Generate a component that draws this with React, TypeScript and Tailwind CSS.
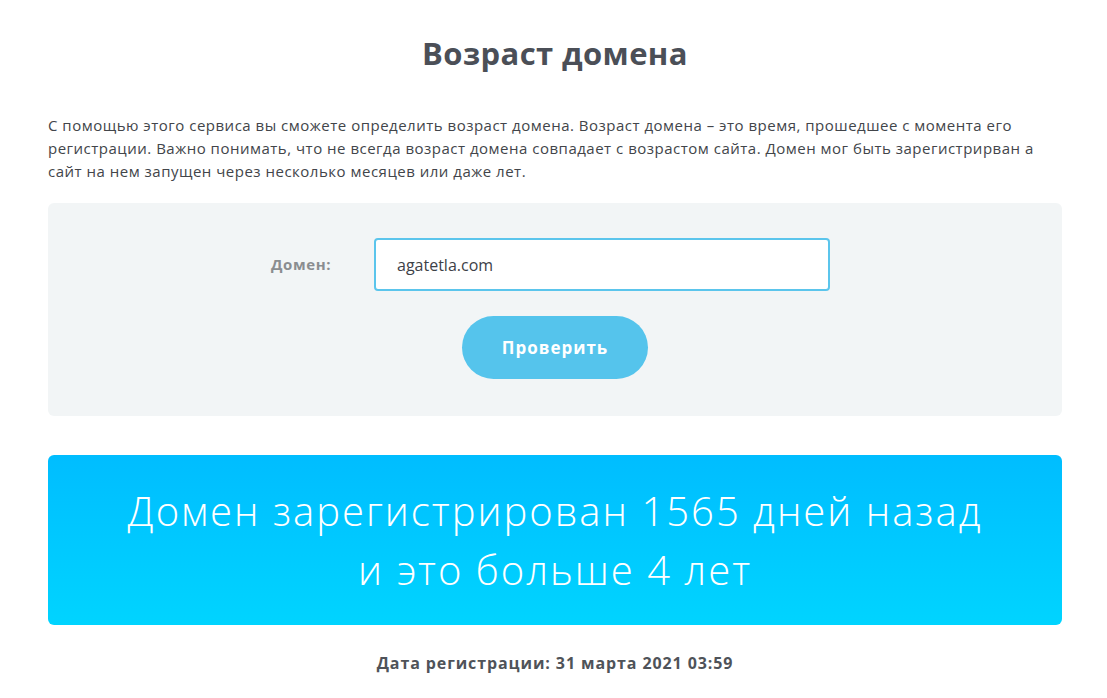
export default function App() {
  return (
    <div className="min-h-screen bg-white font-['Open_Sans',sans-serif] text-[#45484d]">
      <div className="ml-[48px] w-[1014px] pt-[33px]">
        <h1 className="text-center text-[31px] font-bold leading-[40px] tracking-[0.4px] text-[#4b4f57]">
          Возраст домена
        </h1>

        <p className="mt-[41px] text-[15px] leading-[23px] tracking-[0.5px] text-[#42454a]">
          С помощью этого сервиса вы сможете определить возраст домена. Возраст домена – это время, прошедшее с момента его
          <br />
          регистрации. Важно понимать, что не всегда возраст домена совпадает с возрастом сайта. Домен мог быть зарегистрирван а
          <br />
          сайт на нем запущен через несколько месяцев или даже лет.
        </p>

        <div className="mt-[20px] flex h-[213px] flex-col items-center rounded-md bg-[#f2f5f6] pt-[35px]">
          <div className="mr-[9px] flex items-center">
            <label className="w-[103px] text-[15px] font-bold tracking-[0.6px] text-[#8a8d90]">Домен:</label>
            <input
              defaultValue="agatetla.com"
              className="h-[53px] w-[456px] rounded-[4px] border-2 border-[#5bc5ec] bg-white px-[21px] text-[16px] text-[#3d4147] outline-none"
            />
          </div>
          <button className="mt-[25px] h-[63px] w-[186px] rounded-full bg-[#55c4ec] text-[17px] font-bold tracking-[1px] text-white">
            Проверить
          </button>
        </div>

        <div className="mt-[39px] flex h-[170px] flex-col items-center justify-center rounded-md bg-gradient-to-b from-[#00bdff] to-[#00d4ff] text-[40px] font-light leading-[59px] tracking-[2px] text-white">
          <div>Домен зарегистрирован 1565 дней назад</div>
          <div>и это больше 4 лет</div>
        </div>

        <p className="mt-[26px] text-center text-[16px] font-bold tracking-[0.9px] text-[#4f5359]">
          Дата регистрации: 31 марта 2021 03:59
        </p>
      </div>
    </div>
  );
}
